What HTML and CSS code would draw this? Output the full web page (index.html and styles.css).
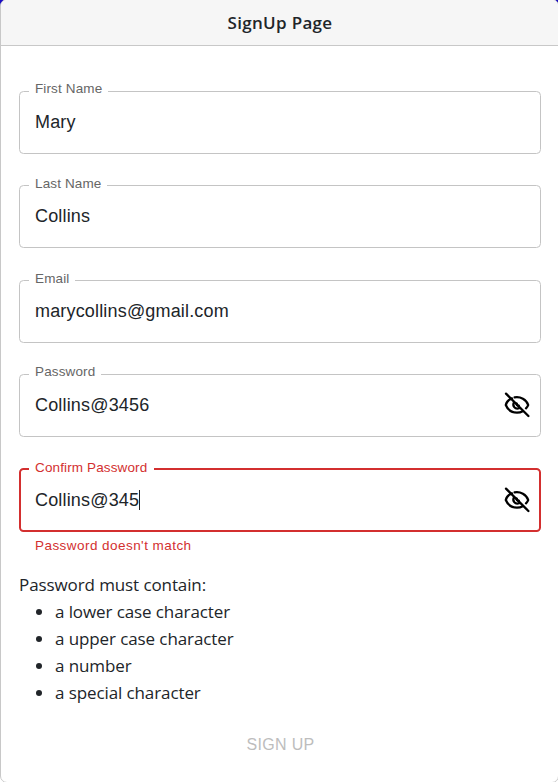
FILE: index.html
```html
<!DOCTYPE html>
<html lang="en">
<head>
<meta charset="utf-8">
<title>SignUp Page</title>
<link rel="stylesheet" href="styles.css">
</head>
<body>
<svg class="defs" width="0" height="0" aria-hidden="true">
  <symbol id="eye-off" viewBox="0 0 26 26">
    <path class="eye" d="M8 6.4C4.8 7.5 2.4 10.3 1.8 13C3.7 17.8 8.2 20.7 13 20.7C15.1 20.7 17 20.2 18.7 19.2M10.6 5.4C16.4 4.4 22.4 7.4 24.2 13C23.8 14.2 23 15.4 22 16.3"/>
    <path class="eye" d="M10 10.2C8.1 13.8 10.9 17.7 15.2 16.2M12.8 11.5C12.4 13.1 13.2 14 14.8 13.7"/>
    <path class="eye" d="M2 1.6L24.4 24"/>
  </symbol>
</svg>
<main class="card">
  <header class="card-header"><h1>SignUp Page</h1></header>
  <form class="card-body">
    <div class="field"><label>First Name</label><span class="value">Mary</span></div>
    <div class="field"><label>Last Name</label><span class="value">Collins</span></div>
    <div class="field"><label>Email</label><span class="value">marycollins@gmail.com</span></div>
    <div class="field"><label>Password</label><span class="value">Collins@3456</span><svg class="icon"><use href="#eye-off"/></svg></div>
    <div class="field error"><label>Confirm Password</label><span class="value">Collins@345</span><span class="caret"></span><svg class="icon"><use href="#eye-off"/></svg></div>
    <p class="helper">Password doesn't match</p>
    <div class="rules">
      <p>Password must contain:</p>
      <ul>
        <li>a lower case character</li>
        <li>a upper case character</li>
        <li>a number</li>
        <li>a special character</li>
      </ul>
    </div>
    <button class="submit" type="button" disabled>SIGN UP</button>
  </form>
</main>
</body>
</html>
```
FILE: styles.css
```css
* { box-sizing: border-box; }
html { overflow: hidden; background: #fff; }
body {
  height: 782px;
  margin: 0;
  overflow: hidden;
  background: linear-gradient(#1a0dc4 20px, #fff 20px);
  color: #212529;
  font-family: "Segoe UI", "Open Sans", "Noto Sans", sans-serif;
  font-size: 18px;
}
.defs { display: block; }
.card {
  width: 559px;
  height: 784px;
  margin-top: -1px;
  background: #fff;
  border: 1px solid #c8c8c8;
  border-radius: 7px;
  overflow: hidden;
}
.card-header {
  height: 46px;
  background: #f6f6f6;
  border-bottom: 1px solid #c8c8c8;
  text-align: center;
}
.card-header h1 {
  margin: 0;
  padding-left: 1px;
  font-size: 17px;
  font-weight: 550;
  line-height: 45px;
  letter-spacing: 0.3px;
}
.card-body { padding: 45px 17px 0 18px; }
.field {
  position: relative;
  display: flex;
  align-items: center;
  width: 522px;
  height: 63px;
  margin-bottom: 31.35px;
  padding: 0 10.5px 0 15px;
  border: 1px solid #c4c4c4;
  border-radius: 4.5px;
  font-family: "Liberation Sans", Arial, sans-serif;
}
.field label {
  position: absolute;
  top: -11.6px;
  left: 9px;
  padding: 0 6px;
  background: #fff;
  color: #666;
  font-size: 13.5px;
  line-height: 18px;
  letter-spacing: 0.127px;
}
.field:nth-child(3) label { top: -11px; }
.value { padding-bottom: 2px; line-height: 26px; letter-spacing: 0.17px; }
.field:nth-child(3) .value { padding-bottom: 0; }
.icon { width: 26px; height: 26px; margin: 0 0 0.5px auto; }
.eye {
  fill: none;
  stroke: #000;
  stroke-width: 2.3;
  stroke-linecap: round;
  stroke-linejoin: round;
}
.error {
  height: 64px;
  margin-bottom: 0;
  padding: 0 9.5px 0 14px;
  border: 2px solid #d32f2f;
}
.error .value { padding-bottom: 0; }
.error label { left: 8px; padding-right: 7px; color: #d32f2f; }
.caret { width: 1px; height: 20px; background: #212529; }
.helper {
  margin: 4px 0 0 16px;
  color: #d32f2f;
  font: 13.5px/20px "Liberation Sans", Arial, sans-serif;
  letter-spacing: 0.45px;
}
.rules { margin-top: 15px; font-size: 17px; line-height: 27px; letter-spacing: -0.1px; }
.rules p { margin: 0; }
.rules ul { margin: 0; padding-left: 36px; }
.submit {
  display: block;
  width: 100%;
  margin-top: 25px;
  padding: 0 0 0 1px;
  border: 0;
  background: transparent;
  color: #bdbdbd;
  font: 16px/28px "Liberation Sans", Arial, sans-serif;
  letter-spacing: 0.35px;
}
```
